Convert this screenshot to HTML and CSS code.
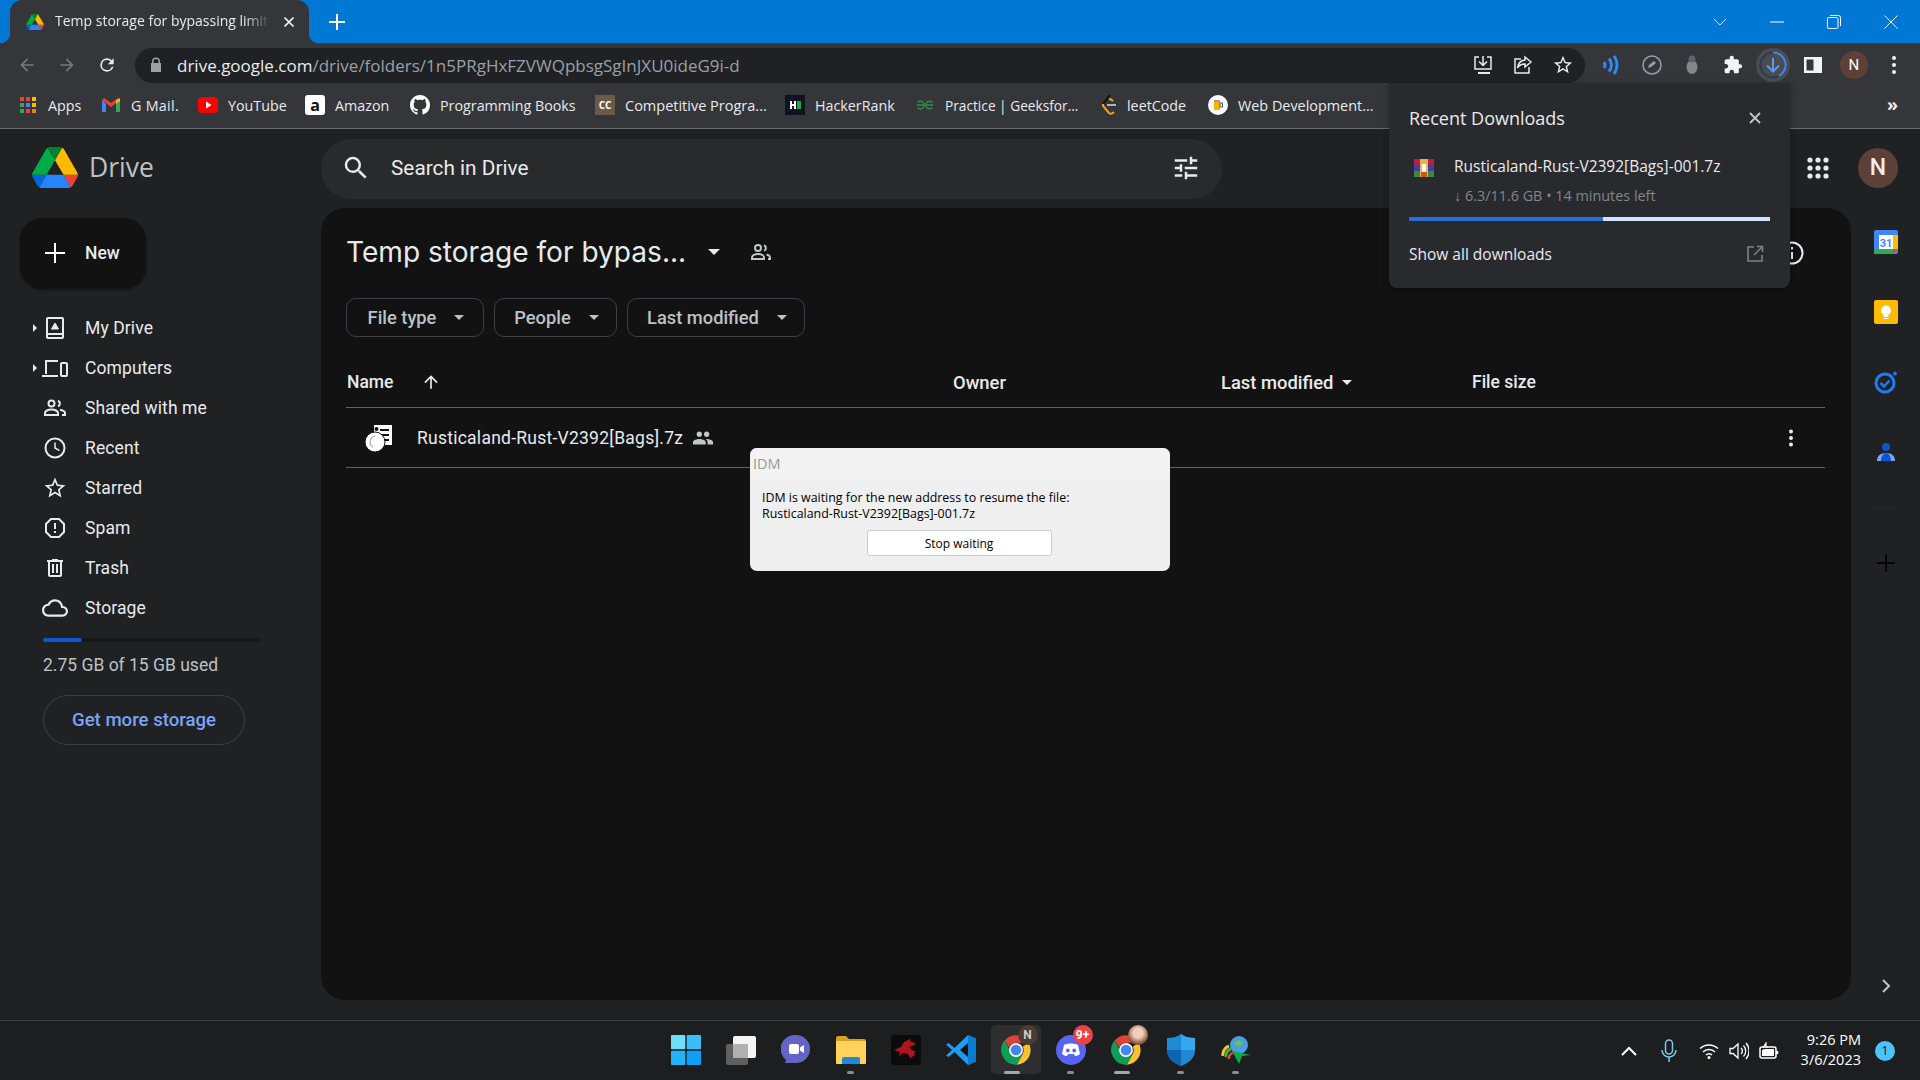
FILE: index.html
```html
<!DOCTYPE html>
<html lang="en">

<head>
    <meta charset="UTF-8">
    <title>Temp storage for bypassing limit</title>
    <link rel="stylesheet" href="styles.css">
</head>

<body>
    <svg class="defs" width="0" height="0">
        <symbol id="drive-logo" viewBox="0 0 87.3 78">
            <path d="m6.6 66.85 3.85 6.65c.8 1.4 1.95 2.5 3.3 3.3l13.75-23.8h-27.5c0 1.55.4 3.1 1.2 4.5z" fill="#0066da"/>
            <path d="m43.65 25-13.75-23.8c-1.35.8-2.5 1.9-3.3 3.3l-25.4 44a9.06 9.06 0 0 0 -1.2 4.5h27.5z" fill="#00ac47"/>
            <path d="m73.55 76.8c1.35-.8 2.5-1.9 3.3-3.3l1.6-2.75 7.65-13.25c.8-1.4 1.2-2.95 1.2-4.5h-27.502l5.852 11.5z" fill="#ea4335"/>
            <path d="m43.65 25 13.75-23.8c-1.35-.8-2.9-1.2-4.5-1.2h-18.5c-1.6 0-3.15.45-4.5 1.2z" fill="#00832d"/>
            <path d="m59.8 53h-32.3l-13.75 23.8c1.35.8 2.9 1.2 4.5 1.2h50.8c1.6 0 3.15-.45 4.5-1.2z" fill="#2684fc"/>
            <path d="m73.4 26.5-12.7-22c-.8-1.4-1.95-2.5-3.3-3.3l-13.75 23.8 16.15 28h27.45c0-1.55-.4-3.1-1.2-4.5z" fill="#ffba00"/>
        </symbol>
        <symbol id="chrome-logo" viewBox="0 0 24 24">
            <path d="M12 1a11 11 0 0 1 9.5 5.5H12a5.5 5.5 0 0 0-5.2 3.7L3.5 4.9A11 11 0 0 1 12 1z" fill="#db4437"/>
            <path d="M21.5 6.5A11 11 0 0 1 12.6 23l4.2-7.7a5.5 5.5 0 0 0 .2-5.8z" fill="#fbc02d"/>
            <path d="M3.5 4.9l4.7 8.7a5.5 5.5 0 0 0 8.6 1.7L12.6 23A11 11 0 0 1 3.5 4.9z" fill="#0f9d58"/>
            <circle cx="12" cy="12" r="5.2" fill="#fff"/>
            <circle cx="12" cy="12" r="4" fill="#4285f4"/>
        </symbol>
    </svg>

    <div class="titlebar">
        <div class="tab">
            <svg class="tab-favicon" width="18" height="16"><use href="#drive-logo"/></svg>
            <span class="tab-title">Temp storage for bypassing limit</span>
            <svg class="tab-close" width="12" height="12" viewBox="0 0 12 12"><path d="M1.5 1.5l9 9m0-9l-9 9" stroke="#fff" stroke-width="1.6"/></svg>
        </div>
        <svg class="new-tab" width="16" height="16" viewBox="0 0 16 16"><path d="M8 0v16M0 8h16" stroke="#fff" stroke-width="2"/></svg>
        <div class="win-controls">
            <svg class="win-btn chevron" width="14" height="8" viewBox="0 0 14 8"><path d="M1 1l6 6 6-6" fill="none" stroke="#cfe4f7" stroke-width="1"/></svg>
            <svg class="win-btn" width="14" height="14" viewBox="0 0 14 14"><path d="M0 7h14" stroke="#fff" stroke-width="1"/></svg>
            <svg class="win-btn" width="14" height="14" viewBox="0 0 14 14"><rect x=".5" y="2.5" width="10.5" height="11" rx="1.5" fill="none" stroke="#fff"/><path d="M3 .5h8.5a2 2 0 0 1 2 2V11" fill="none" stroke="#fff"/></svg>
            <svg class="win-btn" width="14" height="14" viewBox="0 0 14 14"><path d="M.5.5l13 13m0-13l-13 13" stroke="#fff" stroke-width="1"/></svg>
        </div>
    </div>

    <div class="toolbar">
        <div class="nav-btns">
            <svg width="20" height="20" viewBox="0 0 24 24"><path d="M20 11H7.8l5.6-5.6L12 4l-8 8 8 8 1.4-1.4L7.8 13H20z" fill="#74777b"/></svg>
            <svg width="20" height="20" viewBox="0 0 24 24"><path d="M4 11h12.2l-5.6-5.6L12 4l8 8-8 8-1.4-1.4 5.6-5.6H4z" fill="#74777b"/></svg>
            <svg width="20" height="20" viewBox="0 0 24 24"><path d="M17.65 6.35A7.96 7.96 0 0 0 12 4a8 8 0 1 0 7.73 10h-2.08A6 6 0 1 1 12 6c1.66 0 3.14.69 4.22 1.78L13 11h7V4z" fill="#e8eaed"/></svg>
        </div>
        <div class="omnibox">
            <svg class="lock" width="12" height="16" viewBox="0 0 12 16"><path d="M10 6V4.5a4 4 0 0 0-8 0V6H1v9h10V6zM3.5 6V4.5a2.5 2.5 0 0 1 5 0V6z" fill="#9aa0a6"/></svg>
            <span class="url"><span class="url-host">drive.google.com</span>/drive/folders/1n5PRgHxFZVWQpbsgSgInJXU0ideG9i-d</span>
            <div class="omni-actions">
                <svg width="22" height="22" viewBox="0 0 22 22" fill="none" stroke="#e8eaed" stroke-width="1.5"><path d="M7 3H3v12h16V3h-4"/><path d="M11 2v9m-4-3.5l4 4 4-4"/><path d="M6 19h12" stroke-width="2"/></svg>
                <svg width="22" height="22" viewBox="0 0 22 22" fill="none" stroke="#e8eaed" stroke-width="1.5"><path d="M9 5H3v14h14v-6"/><path d="M13 3l6 5-6 5v-3c-4 0-6 1-7.5 4C6 9.5 8.5 6.5 13 6z"/></svg>
                <svg width="22" height="22" viewBox="0 0 24 24"><path d="M22 9.24l-7.19-.62L12 2 9.19 8.63 2 9.24l5.46 4.73L5.82 21 12 17.27 18.18 21l-1.63-7.03L22 9.24zM12 15.4l-3.76 2.27 1-4.28-3.32-2.88 4.38-.38L12 6.1l1.71 4.04 4.38.38-3.32 2.88 1 4.28L12 15.4z" fill="#e8eaed"/></svg>
            </div>
        </div>
        <div class="ext-icons">
            <span class="ext"><svg width="20" height="20" viewBox="0 0 20 20" fill="none" stroke="#2b8cff" stroke-width="2.8"><path d="M3 7a5 5 0 0 1 0 6"/><path d="M8 3.5a10 10 0 0 1 0 13"/><path d="M13 1a15 15 0 0 1 0 18"/></svg></span>
            <span class="ext"><svg width="20" height="20" viewBox="0 0 20 20"><circle cx="10" cy="10" r="9" fill="none" stroke="#9aa0a6" stroke-width="1.5"/><path d="M6 13l1-3 5-4 2 2-5 4z" fill="#9aa0a6"/></svg></span>
            <span class="ext"><svg width="18" height="20" viewBox="0 0 18 20"><ellipse cx="9" cy="12" rx="5.5" ry="7" fill="#80868b"/><circle cx="9" cy="4" r="3.5" fill="#5f6368"/></svg></span>
            <span class="ext"><svg width="20" height="20" viewBox="0 0 24 24"><path d="M20.5 11H19V7c0-1.1-.9-2-2-2h-4V3.5C13 2.12 11.88 1 10.5 1S8 2.12 8 3.5V5H4c-1.1 0-1.99.9-1.99 2v3.8H3.5c1.49 0 2.7 1.21 2.7 2.7s-1.21 2.7-2.7 2.7H2V20c0 1.1.9 2 2 2h3.8v-1.5c0-1.49 1.21-2.7 2.7-2.7 1.49 0 2.7 1.21 2.7 2.7V22H17c1.1 0 2-.9 2-2v-4h1.5c1.38 0 2.5-1.12 2.5-2.5S21.88 11 20.5 11z" fill="#f1f3f4"/></svg></span>
            <span class="ext ext-active"><svg width="30" height="30" viewBox="0 0 30 30" fill="none"><circle cx="15" cy="15" r="12.5" stroke="#2c3a56" stroke-width="2"/><path d="M15 2.5A12.5 12.5 0 0 1 21 26" stroke="#4285f4" stroke-width="2"/><path d="M15 8v13m-6-5.5l6 6 6-6" stroke="#5e97f6" stroke-width="2"/></svg></span>
            <span class="ext"><svg width="20" height="20" viewBox="0 0 20 20"><path d="M1 2h18v16H1z" fill="#f1f3f4"/><path d="M3.5 4.5h7v11h-7z" fill="#35363a"/></svg></span>
            <span class="ext"><span class="chrome-avatar">N</span></span>
            <span class="ext"><svg width="6" height="20" viewBox="0 0 6 20"><circle cx="3" cy="3" r="2" fill="#f1f3f4"/><circle cx="3" cy="10" r="2" fill="#f1f3f4"/><circle cx="3" cy="17" r="2" fill="#f1f3f4"/></svg></span>
        </div>
    </div>

    <div class="bookmarks">
        <div class="bm bm-apps">
            <svg width="16" height="16" viewBox="0 0 16 16">
                <rect width="4" height="4" fill="#ea4335"/><rect x="6" width="4" height="4" fill="#ea4335"/><rect x="12" width="4" height="4" fill="#fbbc04"/>
                <rect y="6" width="4" height="4" fill="#34a853"/><rect x="6" y="6" width="4" height="4" fill="#4285f4"/><rect x="12" y="6" width="4" height="4" fill="#fbbc04"/>
                <rect y="12" width="4" height="4" fill="#34a853"/><rect x="6" y="12" width="4" height="4" fill="#ea4335"/><rect x="12" y="12" width="4" height="4" fill="#ea8600"/>
            </svg>
            <span class="bm-label">Apps</span>
        </div>
        <div class="bm bm-gmail">
            <svg width="18" height="16" viewBox="0 0 18 16"><path d="M0 3v12h4V7z" fill="#4285f4"/><path d="M18 3v12h-4V7z" fill="#34a853"/><path d="M0 3l9 7 9-7-2-2-7 5-7-5-2 2z" fill="#ea4335"/><path d="M14 3.5L18 1v3l-4 3z" fill="#fbbc04"/></svg>
            <span class="bm-label">G Mail.</span>
        </div>
        <div class="bm bm-yt">
            <svg width="20" height="16" viewBox="0 0 20 16"><rect width="20" height="16" rx="4" fill="#f00"/><path d="M8 4.5l5.5 3.5L8 11.5z" fill="#fff"/></svg>
            <span class="bm-label">YouTube</span>
        </div>
        <div class="bm bm-amazon">
            <span class="amazon-icon">a</span>
            <span class="bm-label">Amazon</span>
        </div>
        <div class="bm bm-github">
            <svg width="20" height="20" viewBox="0 0 16 16"><path d="M8 0C3.58 0 0 3.58 0 8c0 3.54 2.29 6.53 5.47 7.59.4.07.55-.17.55-.38 0-.19-.01-.82-.01-1.49-2.01.37-2.53-.49-2.69-.94-.09-.23-.48-.94-.82-1.13-.28-.15-.68-.52-.01-.53.63-.01 1.08.58 1.23.82.72 1.21 1.87.87 2.33.66.07-.52.28-.87.51-1.07-1.78-.2-3.64-.89-3.64-3.95 0-.87.31-1.59.82-2.15-.08-.2-.36-1.02.08-2.12 0 0 .67-.21 2.2.82.64-.18 1.32-.27 2-.27.68 0 1.36.09 2 .27 1.53-1.04 2.2-.82 2.2-.82.44 1.1.16 1.92.08 2.12.51.56.82 1.27.82 2.15 0 3.07-1.87 3.75-3.65 3.95.29.25.54.73.54 1.48 0 1.07-.01 1.93-.01 2.2 0 .21.15.46.55.38A8.013 8.013 0 0016 8c0-4.42-3.58-8-8-8z" fill="#fff"/></svg>
            <span class="bm-label">Programming Books</span>
        </div>
        <div class="bm bm-cc">
            <span class="cc-icon">CC</span>
            <span class="bm-label">Competitive Progra...</span>
        </div>
        <div class="bm bm-hr">
            <span class="hr-icon"><i></i><b></b></span>
            <span class="bm-label">HackerRank</span>
        </div>
        <div class="bm bm-gfg">
            <svg width="20" height="12" viewBox="0 0 20 12" fill="none" stroke="#2f8d46" stroke-width="1.4"><path d="M2.5 3.5A3.8 3.8 0 1 1 2.5 8.5M1.7 6H9.3"/><path d="M17.5 3.5A3.8 3.8 0 1 0 17.5 8.5M10.700 6H18.300"/></svg>
            <span class="bm-label">Practice | Geeksfor...</span>
        </div>
        <div class="bm bm-lc">
            <svg width="17" height="22" viewBox="0 0 17 22" fill="none" stroke-width="2"><path d="M10 1L3 10" stroke="#111"/><path d="M3 10v2l6 7c2 1.5 3 1 5-1" stroke="#f89f1b"/><path d="M9 5c2 0 3 1 4 2" stroke="#f89f1b"/><path d="M7 11h9" stroke="#b3b3b3"/></svg>
            <span class="bm-label">leetCode</span>
        </div>
        <div class="bm bm-web">
            <svg width="20" height="20" viewBox="0 0 20 20"><circle cx="10" cy="10" r="10" fill="#fff"/><rect x="6" y="6" width="6" height="9" fill="#f5b400"/><rect x="6" y="5" width="6" height="2" fill="#999"/><rect x="12" y="8" width="2.5" height="4" fill="none" stroke="#555"/></svg>
            <span class="bm-label">Web Development...</span>
        </div>
        <span class="bm-overflow">»</span>
    </div>

    <div class="app">
        <aside class="sidebar">
            <div class="brand">
                <svg width="46" height="41"><use href="#drive-logo"/></svg>
                <span class="brand-name">Drive</span>
            </div>
            <div class="new-btn">
                <svg width="22" height="22" viewBox="0 0 22 22"><path d="M11 1v20M1 11h20" stroke="#fff" stroke-width="2"/></svg>
                <span>New</span>
            </div>
            <ul class="side-nav">
                <li class="side-item">
                    <span class="caret-right"></span>
                    <svg class="side-icon" width="24" height="24" viewBox="0 0 24 24" fill="none" stroke="#e8eaed" stroke-width="2"><rect x="4" y="2" width="16" height="20" rx="1"/><path d="M4 18h16"/><path d="M12 7l3.5 6h-7z" fill="#e8eaed" stroke-width="1"/></svg>
                    <span>My Drive</span>
                </li>
                <li class="side-item">
                    <span class="caret-right"></span>
                    <svg class="side-icon" width="26" height="24" viewBox="0 0 26 24" fill="none" stroke="#e8eaed" stroke-width="2"><path d="M16 5H4v13"/><path d="M0 20h16"/><rect x="19" y="7" width="6" height="13" rx="1"/></svg>
                    <span>Computers</span>
                </li>
                <li class="side-item">
                    <svg class="side-icon" width="24" height="24" viewBox="0 0 24 24" fill="none" stroke="#e8eaed" stroke-width="2"><circle cx="8.5" cy="7.5" r="3"/><path d="M15 4.7a3 3 0 0 1 0 5.6"/><path d="M2 19v-2c0-2 3-3.5 6.5-3.5S15 15 15 17v2z"/><path d="M17 13.7c2.5.5 5 1.5 5 3.3v2h-3"/></svg>
                    <span>Shared with me</span>
                </li>
                <li class="side-item">
                    <svg class="side-icon" width="24" height="24" viewBox="0 0 24 24" fill="none" stroke="#e8eaed" stroke-width="2"><circle cx="12" cy="12" r="9.5"/><path d="M12 6.5V12l4.5 2.7" stroke-width="1.5"/></svg>
                    <span>Recent</span>
                </li>
                <li class="side-item">
                    <svg class="side-icon" width="25" height="25" viewBox="0 0 24 24"><path d="M22 9.24l-7.19-.62L12 2 9.19 8.63 2 9.24l5.46 4.73L5.82 21 12 17.27 18.18 21l-1.63-7.03L22 9.24zM12 15.4l-3.76 2.27 1-4.28-3.32-2.88 4.38-.38L12 6.1l1.71 4.04 4.38.38-3.32 2.88 1 4.28L12 15.4z" fill="#e8eaed"/></svg>
                    <span>Starred</span>
                </li>
                <li class="side-item">
                    <svg class="side-icon" width="24" height="24" viewBox="0 0 24 24" fill="none" stroke="#e8eaed" stroke-width="2"><path d="M8 3h8l5 5v8l-5 5H8l-5-5V8z"/><path d="M12 7v6M12 15v2"/></svg>
                    <span>Spam</span>
                </li>
                <li class="side-item">
                    <svg class="side-icon" width="24" height="24" viewBox="0 0 24 24"><path d="M15 4V3H9v1H4v2h1v13c0 1.1.9 2 2 2h10c1.1 0 2-.9 2-2V6h1V4h-5zm2 15H7V6h10v13zM9 8h2v9H9zm4 0h2v9h-2z" fill="#e8eaed"/></svg>
                    <span>Trash</span>
                </li>
                <li class="side-item">
                    <svg class="side-icon" width="26" height="26" viewBox="0 0 24 24"><path d="M19.35 10.04C18.67 6.59 15.64 4 12 4 9.11 4 6.6 5.64 5.35 8.04 2.34 8.36 0 10.91 0 14c0 3.31 2.69 6 6 6h13c2.76 0 5-2.24 5-5 0-2.64-2.05-4.78-4.65-4.96zM19 18H6c-2.21 0-4-1.79-4-4 0-2.05 1.53-3.76 3.56-3.97l1.07-.11.5-.95C8.08 7.14 9.94 6 12 6c2.62 0 4.88 1.86 5.39 4.43l.3 1.5 1.53.11c1.56.1 2.78 1.41 2.78 2.96 0 1.65-1.35 3-3 3z" fill="#e8eaed"/></svg>
                    <span>Storage</span>
                </li>
            </ul>
            <div class="storage-bar"><div class="storage-fill"></div></div>
            <p class="storage-text">2.75 GB of 15 GB used</p>
            <div class="storage-btn">Get more storage</div>
        </aside>

        <header class="topbar">
            <div class="search">
                <svg width="30" height="30" viewBox="0 0 24 24"><path d="M15.5 14h-.79l-.28-.27A6.471 6.471 0 0 0 16 9.5 6.5 6.5 0 1 0 9.5 16c1.61 0 3.09-.59 4.23-1.57l.27.28v.79l5 4.99L20.49 19l-4.99-5zm-6 0C7.01 14 5 11.99 5 9.5S7.01 5 9.5 5 14 7.01 14 9.5 11.99 14 9.5 14z" fill="#e8eaed"/></svg>
                <span class="search-text">Search in Drive</span>
                <svg class="search-tune" width="30" height="30" viewBox="0 0 24 24"><path d="M3 17v2h6v-2H3zM3 5v2h10V5H3zm10 16v-2h8v-2h-8v-2h-2v6h2zM7 9v2H3v2h4v2h2V9H7zm14 4v-2H11v2h10zm-6-4h2V7h4V5h-4V3h-2v6z" fill="#e8eaed"/></svg>
            </div>
            <div class="top-right">
                <svg width="22" height="22" viewBox="0 0 22 22" fill="#e8eaed">
                    <circle cx="3" cy="3" r="2.6"/><circle cx="11" cy="3" r="2.6"/><circle cx="19" cy="3" r="2.6"/>
                    <circle cx="3" cy="11" r="2.6"/><circle cx="11" cy="11" r="2.6"/><circle cx="19" cy="11" r="2.6"/>
                    <circle cx="3" cy="19" r="2.6"/><circle cx="11" cy="19" r="2.6"/><circle cx="19" cy="19" r="2.6"/>
                </svg>
                <span class="drive-avatar">N</span>
            </div>
        </header>

        <main class="panel">
            <div class="folder-head">
                <h1 class="folder-title">Temp storage for bypas...</h1>
                <span class="caret caret-title"></span>
                <svg class="folder-people" width="24" height="24" viewBox="0 0 24 24" fill="none" stroke="#c4c7c5" stroke-width="2"><circle cx="9" cy="8" r="3"/><path d="M15 5.2a3 3 0 0 1 0 5.6"/><path d="M3 19v-1.5c0-2 2.5-3.5 6-3.5s6 1.5 6 3.5V19z"/><path d="M17.5 14.5c2 .5 3.5 1.5 3.5 3V19h-2"/></svg>
                <svg class="folder-info" width="26" height="26" viewBox="0 0 26 26" fill="none" stroke="#e8eaed" stroke-width="2"><circle cx="13" cy="13" r="10.5"/><path d="M13 12v7M13 7v2.5"/></svg>
            </div>
            <div class="chips">
                <div class="chip chip-type">File type<span class="caret"></span></div>
                <div class="chip chip-people">People<span class="caret"></span></div>
                <div class="chip chip-modified">Last modified<span class="caret"></span></div>
            </div>
            <div class="list-head">
                <div class="col-name">
                    <span>Name</span>
                    <svg class="sort-arrow" width="20" height="20" viewBox="0 0 24 24"><path d="M4 12l1.41 1.41L11 7.83V20h2V7.83l5.58 5.59L20 12l-8-8-8 8z" fill="#e8eaed"/></svg>
                </div>
                <div class="col-owner">Owner</div>
                <div class="col-modified">Last modified<span class="caret"></span></div>
                <div class="col-size">File size</div>
            </div>
            <div class="file-row">
                <svg class="file-icon" width="28" height="28" viewBox="0 0 28 28">
                    <path d="M9 1h18v20H9z" fill="#fff"/>
                    <path d="M15 6h9M15 11h9M19 16h5" stroke="#121212" stroke-width="1.8"/>
                    <circle cx="11.5" cy="5" r="2" fill="#121212"/>
                    <circle cx="10" cy="18" r="10" fill="#fff" stroke="#121212" stroke-width="1"/>
                    <path d="M10 12a6 6 0 0 0-2 11" fill="none" stroke="#aaa" stroke-width="1.2"/>
                </svg>
                <span class="file-name">Rusticaland-Rust-V2392[Bags].7z</span>
                <svg class="file-shared" width="22" height="22" viewBox="0 0 24 24"><path d="M16 11c1.66 0 2.99-1.34 2.99-3S17.66 5 16 5c-1.66 0-3 1.34-3 3s1.34 3 3 3zm-8 0c1.66 0 2.99-1.34 2.99-3S9.66 5 8 5C6.34 5 5 6.34 5 8s1.34 3 3 3zm0 2c-2.33 0-7 1.17-7 3.5V19h14v-2.5c0-2.33-4.67-3.5-7-3.5zm8 0c-.29 0-.62.02-.97.05 1.16.84 1.97 1.97 1.97 3.45V19h6v-2.5c0-2.33-4.67-3.5-7-3.5z" fill="#c4c7c5"/></svg>
                <svg class="file-more" width="6" height="18" viewBox="0 0 6 18" fill="#e8eaed"><circle cx="3" cy="2.5" r="2"/><circle cx="3" cy="9" r="2"/><circle cx="3" cy="15.5" r="2"/></svg>
            </div>
        </main>

        <nav class="rail">
            <svg width="24" height="24" viewBox="0 0 24 24"><rect width="24" height="24" rx="2" fill="#4285f4"/><rect x="5" y="5" width="14" height="14" fill="#fff"/><rect x="19" y="5" width="5" height="14" fill="#fbbc04"/><rect y="19" width="19" height="5" fill="#34a853"/><path d="M19 19h5l-5 5z" fill="#ea4335"/><text x="12" y="16.5" class="cal-num">31</text></svg>
            <svg width="24" height="24" viewBox="0 0 24 24"><rect width="24" height="24" rx="2" fill="#ffbb00"/><circle cx="12" cy="10.5" r="5" fill="#fff"/><rect x="9.5" y="15" width="5" height="2" fill="#fff"/><rect x="9.5" y="18" width="5" height="1" fill="#fff"/></svg>
            <svg width="24" height="24" viewBox="0 0 24 24" fill="none" stroke="#1f7cf2" stroke-width="3"><circle cx="11" cy="13" r="9"/><path d="M6.5 13l3.5 3.5 5.5-6" stroke="#1f7cf2" stroke-width="2.5"/><circle cx="21" cy="3.5" r="1.5" fill="#1f7cf2" stroke-width="1"/></svg>
            <svg width="24" height="24" viewBox="0 0 24 24"><circle cx="12" cy="7" r="4" fill="#0b57d0"/><path d="M3 21c0-5 3-8 9-8s9 3 9 8z" fill="#7fa5f0"/><path d="M7 21c0-4 2-8 5-8s5 4 5 8z" fill="#0b57d0"/></svg>
            <div class="rail-divider"></div>
            <svg class="rail-plus" width="18" height="18" viewBox="0 0 18 18"><path d="M9 0v18M0 9h18" stroke="#050505" stroke-width="1.8"/></svg>
            <svg class="rail-hide" width="10" height="14" viewBox="0 0 10 14"><path d="M2 1l6 6-6 6" fill="none" stroke="#c4c7c5" stroke-width="2"/></svg>
        </nav>
    </div>

    <div class="taskbar">
        <div class="task-icons">
            <span class="task-item">
                <svg width="30" height="30" viewBox="0 0 30 30"><rect width="14.3" height="14.3" rx="1" fill="#6fdcfb"/><rect x="15.7" width="14.3" height="14.3" rx="1" fill="#3bbdf7"/><rect y="15.7" width="14.3" height="14.3" rx="1" fill="#22b2f7"/><rect x="15.7" y="15.7" width="14.3" height="14.3" rx="1" fill="#0fa0f5"/></svg>
            </span>
            <span class="task-item">
                <svg width="30" height="30" viewBox="0 0 30 30"><rect y="9" width="22" height="21" rx="2" fill="#5f5f5f"/><rect x="7" y="1" width="23" height="22" rx="2" fill="#f4f4f4"/><rect x="7" y="9" width="15" height="14" fill="#b0b0b0"/></svg>
            </span>
            <span class="task-item">
                <svg width="30" height="32" viewBox="0 0 30 32"><path d="M15 1a14 14 0 0 1 0 28H4l1-3A14 14 0 0 1 15 1z" fill="#6264c8"/><rect x="8" y="10" width="10" height="10" rx="2" fill="#fff"/><path d="M19 13.5l4-2.5v8l-4-2.5z" fill="#fff"/></svg>
            </span>
            <span class="task-item task-open">
                <svg width="30" height="28" viewBox="0 0 30 28"><path d="M0 2a2 2 0 0 1 2-2h8l3 3h15a2 2 0 0 1 2 2v4H0z" fill="#d8a01e"/><rect y="5" width="30" height="23" rx="1" fill="#ffd35c"/><path d="M8 21h14a2 2 0 0 1 2 2v5H6v-5a2 2 0 0 1 2-2z" fill="#1c8ad8"/></svg>
            </span>
            <span class="task-item">
                <svg width="30" height="30" viewBox="0 0 30 30"><rect width="30" height="30" rx="3" fill="#0b0b0b"/><path d="M3 15l7-3 3-5 6-3 1 3 5 1-3 3-4 1 3 3 3 1-1 5-4 2-2-4-5-1-4 3 1-4z" fill="#b0151b"/></svg>
            </span>
            <span class="task-item">
                <svg width="30" height="30" viewBox="0 0 30 30"><path d="M22 0l8 3.5v23L22 30 8.5 17 2.5 22 0 20.5 6 15 0 9.5 2.5 8l6 5z" fill="#1f9cf0"/><path d="M22 8l-8 7 8 7z" fill="#121416"/><path d="M22 0l8 3.5v23L22 30z" fill="#0a7cd0"/></svg>
            </span>
            <span class="task-item task-active task-running">
                <svg width="32" height="32"><use href="#chrome-logo"/></svg>
                <span class="task-badge badge-n">N</span>
            </span>
            <span class="task-item task-open">
                <svg width="32" height="32" viewBox="0 0 32 32"><circle cx="16" cy="16" r="15" fill="#5865f2"/><path d="M9 11c4-2 10-2 14 0l2 9c-2 1.5-3.5 2-5 2l-1-2h-6l-1 2c-1.5 0-3-.5-5-2z" fill="#fff"/><circle cx="12.8" cy="16.5" r="1.9" fill="#5865f2"/><circle cx="19.2" cy="16.5" r="1.9" fill="#5865f2"/></svg>
                <span class="task-badge badge-red">9+</span>
            </span>
            <span class="task-item task-running">
                <svg width="32" height="32"><use href="#chrome-logo"/></svg>
                <span class="task-badge badge-photo"></span>
            </span>
            <span class="task-item task-open">
                <svg width="28" height="32" viewBox="0 0 28 32"><path d="M14 0c4 3 9 4 14 4v12c0 8-6 13-14 16C6 29 0 24 0 16V4c5 0 10-1 14-4z" fill="#1e8ad6"/><path d="M14 0c4 3 9 4 14 4v12H14z" fill="#35a7ee"/><path d="M14 16H0c0 8 6 13 14 16z" fill="#0f63b5"/></svg>
            </span>
            <span class="task-item task-open">
                <svg width="30" height="30" viewBox="0 0 30 30"><path d="M2 21a9 9 0 0 1 6-10" fill="none" stroke="#f2c230" stroke-width="3"/><path d="M5 22a7 7 0 0 1 5-8" fill="none" stroke="#36b54a" stroke-width="3"/><path d="M8 24a5 5 0 0 1 4-6" fill="none" stroke="#e8453c" stroke-width="2.5"/><circle cx="18" cy="10" r="9" fill="#4a9fe0"/><path d="M12 8l6-3 4 3-4 4z" fill="#6cc24a"/><path d="M11 16l19 4-9 1-3 8z" fill="#0fa84a"/></svg>
            </span>
        </div>
        <div class="tray">
            <svg class="tray-up" width="16" height="10" viewBox="0 0 16 10"><path d="M1 9l7-7 7 7" fill="none" stroke="#fff" stroke-width="2"/></svg>
            <svg class="tray-mic" width="16" height="24" viewBox="0 0 16 24" fill="none" stroke="#7cc6e6" stroke-width="1.5"><rect x="4.5" y="1" width="7" height="14" rx="3.5"/><path d="M1 11a7 7 0 0 0 14 0M8 18v5"/></svg>
            <svg class="tray-wifi" width="20" height="16" viewBox="0 0 20 16" fill="none" stroke="#fff" stroke-width="1.5"><path d="M1 5.5a13 13 0 0 1 18 0M4 9a8.500 8.500 0 0 1 12 0M7 12a4 4 0 0 1 6 0"/><circle cx="10" cy="14.5" r=".8" fill="#fff"/></svg>
            <svg class="tray-sound" width="20" height="18" viewBox="0 0 20 18" fill="none" stroke="#fff" stroke-width="1.3"><path d="M1 6.5h3L9 2v14l-5-4.5H1z"/><path d="M12 6a4 4 0 0 1 0 6M14.5 3.5a8 8 0 0 1 0 11M17 1a12 12 0 0 1 0 16"/></svg>
            <svg class="tray-batt" width="21" height="18" viewBox="0 0 21 18" fill="none" stroke="#fff" stroke-width="1.5"><rect x="1" y="5" width="16" height="11" rx="2"/><path d="M3 14V8l3-1h9v7z" fill="#fff" stroke="none"/><path d="M18 9v3" stroke-width="2.5"/><path d="M4 6l3-5v4h2" stroke-width="1.2"/></svg>
            <div class="clock">
                <div>9:26 PM</div>
                <div>3/6/2023</div>
            </div>
            <span class="notify">1</span>
        </div>
    </div>

    <!-- chrome download bubble, floats over the page -->
    <div class="downloads">
        <div class="dl-head">
            <span>Recent Downloads</span>
            <svg width="12" height="12" viewBox="0 0 12 12"><path d="M1 1l10 10m0-10L1 11" stroke="#c4c7c5" stroke-width="1.8"/></svg>
        </div>
        <div class="dl-file">
            <svg class="dl-icon" width="20" height="18" viewBox="0 0 20 18">
                <rect width="20" height="6" fill="#b3204d"/><rect y="6" width="20" height="6" fill="#3f3fa8"/><rect y="12" width="20" height="6" fill="#3a8a3a"/>
                <rect x="6" y="0" width="8" height="18" fill="#e9b44c"/><rect x="8" y="5" width="4" height="8" fill="#fff"/><rect x="7" y="13" width="6" height="5" fill="#c85a1a"/>
            </svg>
            <div class="dl-text">
                <div class="dl-name">Rusticaland-Rust-V2392[Bags]-001.7z</div>
                <div class="dl-status">↓ 6.3/11.6 GB • 14 minutes left</div>
            </div>
        </div>
        <div class="dl-progress"><div class="dl-progress-fill"></div></div>
        <div class="dl-foot">
            <span>Show all downloads</span>
            <svg width="18" height="18" viewBox="0 0 18 18" fill="none" stroke="#7d8186" stroke-width="1.6"><path d="M8 2H2v14h14v-6"/><path d="M11 1.5h5.500V7M16 2L8 10"/></svg>
        </div>
    </div>

    <!-- IDM waiting dialog -->
    <div class="idm">
        <div class="idm-title">IDM</div>
        <div class="idm-body">
            <p>IDM is waiting for the new address to resume the file:<br>Rusticaland-Rust-V2392[Bags]-001.7z</p>
            <button class="idm-btn">Stop waiting</button>
        </div>
    </div>
</body>

</html>
```

FILE: styles.css
```css
* {
    margin: 0;
    padding: 0;
    box-sizing: border-box;
}

body {
    width: 1920px;
    height: 1080px;
    overflow: hidden;
    display: flex;
    flex-direction: column;
    position: relative;
    background: #1f2123;
    color: #e8eaed;
    font-family: "Roboto", "Liberation Sans", sans-serif;
    font-size: 17.5px;
}

svg {
    display: block;
    flex-shrink: 0;
}

.defs {
    position: absolute;
}

/* browser chrome */
.titlebar {
    height: 43px;
    display: flex;
    align-items: center;
    padding-left: 10px;
    background: #0078d4;
}

.tab {
    width: 299px;
    height: 43px;
    position: relative;
    display: flex;
    align-items: center;
    padding: 0 14px 0 16px;
    background: #35363a;
    border-radius: 12px 12px 0 0;
    font-family: "Open Sans", "Liberation Sans", sans-serif;
    font-size: 14px;
    color: #e8eaed;
}

.tab::before,
.tab::after {
    content: "";
    position: absolute;
    bottom: 0;
    width: 10px;
    height: 10px;
}

.tab::before {
    left: -10px;
    background: radial-gradient(circle at 0 0, transparent 10px, #35363a 10.5px);
}

.tab::after {
    right: -10px;
    background: radial-gradient(circle at 100% 0, transparent 10px, #35363a 10.5px);
}

.tab-favicon {
    margin-right: 11px;
}

.tab-title {
    flex: 1;
    overflow: hidden;
    white-space: nowrap;
    padding-bottom: 2px;
    -webkit-mask-image: linear-gradient(to right, #000 88%, transparent);
    mask-image: linear-gradient(to right, #000 88%, transparent);
}

.tab-close {
    margin-left: 13px;
}

.new-tab {
    margin-left: 20px;
}

.win-controls {
    margin-left: auto;
    display: flex;
    align-items: center;
    gap: 43px;
    padding-right: 22px;
}

.toolbar {
    height: 42px;
    display: flex;
    align-items: center;
    padding-top: 2px;
    background: #35363a;
}

.nav-btns {
    width: 135px;
    display: flex;
    gap: 20px;
    padding-left: 17px;
}

.omnibox {
    width: 1450px;
    height: 35px;
    display: flex;
    align-items: center;
    padding-left: 15px;
    background: #202124;
    border-radius: 18px;
}

.lock {
    margin-right: 15px;
}

.url {
    font-family: "Open Sans", "Liberation Sans", sans-serif;
    font-size: 17px;
    color: #9aa0a6;
    white-space: nowrap;
}

.url-host {
    color: #e8eaed;
}

.omni-actions {
    margin-left: auto;
    display: flex;
    gap: 18px;
    padding-right: 11px;
}

.ext-icons {
    display: flex;
    align-items: center;
    margin-left: 6px;
}

.ext {
    width: 40.5px;
    height: 41px;
    display: flex;
    align-items: center;
    justify-content: center;
}

.ext-active {
    background: #4a4c50;
    border-radius: 50%;
    width: 34px;
    height: 34px;
    margin: 0 3px;
}

.chrome-avatar {
    width: 28px;
    height: 28px;
    display: flex;
    align-items: center;
    justify-content: center;
    border-radius: 50%;
    background: #5d4037;
    font-size: 15px;
    color: #fff;
}

.bookmarks {
    height: 44px;
    display: grid;
    grid-template-columns: 82px 96px 107px 105px 185px 190px 130px 185px 108px 1fr;
    align-items: center;
    position: relative;
    padding: 0 0 3px 20px;
    background: #35363a;
    border-bottom: 1px solid #6a6c70;
    font-family: "Open Sans", "Liberation Sans", sans-serif;
    font-size: 14.3px;
    color: #e8eaed;
}

.bm {
    display: flex;
    align-items: center;
    gap: 10px;
    white-space: nowrap;
}

.bm-apps {
    gap: 12px;
}

.bm-gmail {
    gap: 11px;
}

.bm-gmail .bm-label {
    letter-spacing: 0.3px;
}

.bm-cc .bm-label {
    font-size: 14.5px;
}

.bm-gfg .bm-label {
    font-size: 13.7px;
}

.bm-web .bm-label {
    font-size: 14.4px;
}

.amazon-icon {
    width: 20px;
    height: 20px;
    display: flex;
    align-items: center;
    justify-content: center;
    border-radius: 3px;
    background: #fff;
    color: #111;
    font-weight: 700;
    font-size: 16px;
}

.cc-icon {
    width: 20px;
    height: 20px;
    display: flex;
    align-items: center;
    justify-content: center;
    background: #6b5a48;
    color: #fff;
    font-size: 10px;
    font-weight: 700;
}

.hr-icon {
    width: 20px;
    height: 20px;
    display: flex;
    align-items: center;
    justify-content: center;
    gap: 1px;
    background: #0e141e;
}

.hr-icon i {
    width: 6px;
    height: 8px;
    border: solid #fff;
    border-width: 0 2px;
    background: linear-gradient(#0e141e 3px, #fff 3px, #fff 5px, #0e141e 5px);
}

.hr-icon b {
    width: 4px;
    height: 8px;
    background: #1ba94c;
}

.bm-overflow {
    position: absolute;
    right: 22px;
    top: 7px;
    font-size: 18px;
    font-weight: 700;
}

/* drive */
.app {
    flex: 1;
    min-height: 0;
    display: grid;
    grid-template-columns: 321px 1fr 69px;
    grid-template-rows: 79px 1fr;
}

.sidebar {
    grid-row: 1 / 3;
    padding-left: 20px;
}

.brand {
    height: 79px;
    display: flex;
    align-items: center;
    gap: 11px;
    padding: 0 0 3px 12px;
}

.brand-name {
    font-size: 26.5px;
    color: #bdc1c6;
    font-family: "Open Sans", "Roboto", sans-serif;
}

.new-btn {
    width: 126px;
    height: 71px;
    margin-top: 10px;
    display: flex;
    align-items: center;
    gap: 19px;
    padding: 0 0 2px 24px;
    background: #121212;
    border-radius: 22px;
    font-weight: 500;
    box-shadow: 0 1px 3px rgba(0, 0, 0, 0.4);
}

.side-nav {
    list-style: none;
    margin-top: 19px;
}

.side-item {
    height: 40px;
    display: flex;
    align-items: center;
    position: relative;
    padding-left: 65px;
    letter-spacing: 0.1px;
}

.side-icon {
    position: absolute;
    left: 35px;
    top: 50%;
    transform: translate(-50%, -50%);
}

.caret-right {
    position: absolute;
    left: 13px;
    top: 50%;
    margin-top: -4px;
    border-left: 4px solid #e8eaed;
    border-top: 4px solid transparent;
    border-bottom: 4px solid transparent;
}

.storage-bar {
    width: 217px;
    height: 4px;
    margin: 10px 0 0 23px;
    background: #17181a;
    border-radius: 2px;
}

.storage-fill {
    width: 39px;
    height: 4px;
    background: #0b57d0;
    border-radius: 2px;
}

.storage-text {
    margin: 13px 0 0 23px;
    color: #bdc1c6;
}

.storage-btn {
    width: 202px;
    height: 50px;
    margin: 20px 0 0 23px;
    display: flex;
    align-items: center;
    justify-content: center;
    border: 1px solid #3c3f43;
    border-radius: 25px;
    color: #7fa2f7;
    font-weight: 500;
    font-size: 18.6px;
}

.topbar {
    grid-column: 2 / 4;
    display: flex;
    align-items: center;
    justify-content: space-between;
}

.search {
    width: 901px;
    height: 60px;
    display: flex;
    align-items: center;
    padding: 0 20px;
    gap: 20px;
    background: #282a2c;
    border-radius: 30px;
    font-size: 20.8px;
}

.search svg {
    margin-top: -1px;
}

.search-text {
    padding-bottom: 2px;
}

.search-tune {
    margin-left: auto;
    transform: translateX(-1px);
}

.top-right {
    display: flex;
    align-items: center;
    gap: 29px;
    padding: 0 22px 2px 0;
}

.drive-avatar {
    width: 40px;
    height: 40px;
    display: flex;
    align-items: center;
    justify-content: center;
    border-radius: 50%;
    background: #5d4037;
    font-size: 23px;
    font-weight: 500;
    color: #eee;
}

.panel {
    margin-bottom: 20px;
    padding: 22px 26px 0 25px;
    background: #121212;
    border-radius: 24px;
}

.folder-head {
    height: 44px;
    display: flex;
    align-items: center;
    position: relative;
}

.folder-title {
    width: 340px;
    font-family: "Inter", "Roboto", sans-serif;
    font-size: 28.1px;
    font-weight: 400;
    white-space: nowrap;
}

.caret {
    display: inline-block;
    border-top: 5px solid currentColor;
    border-left: 5px solid transparent;
    border-right: 5px solid transparent;
    margin-left: 18px;
}

.caret-title {
    margin-left: 22px;
    color: #e8eaed;
    border-top-width: 6px;
    border-left-width: 6px;
    border-right-width: 6px;
}

.folder-people {
    margin-left: 29px;
}

.folder-info {
    position: absolute;
    right: 20px;
    top: 10px;
}

.chips {
    margin-top: 24px;
    display: flex;
    gap: 10px;
}

.chip {
    height: 39px;
    display: flex;
    align-items: center;
    justify-content: center;
    padding-left: 2px;
    border: 1px solid #3c3f43;
    border-radius: 10px;
    color: #bdc1c6;
    font-weight: 500;
    font-size: 18.3px;
}

.chip-type {
    width: 138px;
}

.chip-people {
    width: 123px;
}

.chip-modified {
    width: 178px;
}

.list-head {
    height: 71px;
    padding-top: 20px;
    display: flex;
    align-items: center;
    border-bottom: 1px solid #5f6368;
    font-weight: 500;
}

.col-name {
    width: 607px;
    display: flex;
    align-items: center;
    padding-left: 1px;
}

.sort-arrow {
    margin-left: 28px;
}

.col-owner {
    width: 268px;
    font-size: 18.4px;
}

.col-modified {
    width: 251px;
    display: flex;
    align-items: center;
    font-size: 18.4px;
}

.col-modified .caret {
    margin-left: 9px;
    color: #e8eaed;
}

.file-row {
    height: 60px;
    display: flex;
    align-items: center;
    padding-left: 19px;
    border-bottom: 1px solid #5f6368;
}

.file-name {
    margin-left: 24px;
    letter-spacing: 0.25px;
}

.file-shared {
    margin-left: 9px;
}

.file-more {
    margin-left: auto;
    margin-right: 31px;
}

.rail {
    display: flex;
    flex-direction: column;
    align-items: center;
    padding-top: 22px;
    position: relative;
    gap: 46px;
}

.cal-num {
    font-family: "Roboto", sans-serif;
    font-size: 11px;
    font-weight: 700;
    fill: #4285f4;
    text-anchor: middle;
}

.rail-divider {
    width: 26px;
    height: 1px;
    margin-top: -2px;
    background: #25272a;
}

.rail-plus {
    margin-top: -1px;
}

.rail-hide {
    position: absolute;
    top: 771px;
}

/* windows taskbar */
.taskbar {
    height: 60px;
    display: flex;
    align-items: center;
    justify-content: center;
    position: relative;
    padding-bottom: 2px;
    background: #1c1e20;
    border-top: 1px solid #3a3b3d;
}

.task-icons {
    display: flex;
    gap: 5px;
    margin-left: 1px;
}

.task-item {
    width: 50px;
    height: 49px;
    position: relative;
    display: flex;
    align-items: center;
    justify-content: center;
    border-radius: 5px;
}

.task-active {
    background: #2c2e30;
}

.task-open::after,
.task-running::after {
    content: "";
    position: absolute;
    left: 50%;
    bottom: 0;
    width: 7px;
    height: 3px;
    margin-left: -3.5px;
    border-radius: 2px;
    background: #8a8c8e;
}

.task-running::after {
    width: 16px;
    margin-left: -12px;
    background: #a5a7a9;
}

.task-badge {
    position: absolute;
    right: 3px;
    top: 0;
    width: 20px;
    height: 20px;
    display: flex;
    align-items: center;
    justify-content: center;
    border-radius: 50%;
    font-size: 12px;
    font-weight: 700;
}

.badge-n {
    background: #4d3a33;
    color: #ccc;
}

.badge-red {
    background: #ed4245;
    color: #fff;
}

.badge-photo {
    background: radial-gradient(circle at 50% 40%, #f0d0b8 30%, #8a4f3c 70%);
}

.tray {
    position: absolute;
    right: 0;
    top: 0;
    height: 59px;
    display: flex;
    align-items: center;
    font-family: "Open Sans", "Liberation Sans", sans-serif;
    font-size: 14.5px;
    color: #fff;
}

.tray-mic {
    margin-left: 24px;
}

.tray-wifi {
    margin-left: 22px;
}

.tray-sound {
    margin-left: 10px;
}

.tray-batt {
    margin-left: 10px;
}

.clock {
    margin: -1px 0 0 21px;
    text-align: right;
    line-height: 20px;
}

.notify {
    width: 20px;
    height: 20px;
    margin: 0 25px 0 14px;
    display: flex;
    align-items: center;
    justify-content: center;
    border-radius: 50%;
    background: #4cc2ff;
    color: #111;
    font-size: 12px;
}

/* overlays */
.downloads {
    position: absolute;
    left: 1389px;
    top: 83px;
    width: 401px;
    height: 205px;
    padding: 0 20px;
    background: #292a2e;
    border-radius: 0 0 8px 8px;
    box-shadow: 0 2px 6px rgba(0, 0, 0, 0.3);
    font-family: "Open Sans", "Liberation Sans", sans-serif;
}

.dl-head {
    height: 70px;
    display: flex;
    align-items: center;
    justify-content: space-between;
    padding-right: 9px;
    font-size: 18px;
}

.dl-file {
    display: flex;
    gap: 20px;
    padding-left: 5px;
    margin-top: 1px;
}

.dl-icon {
    margin-top: 5px;
}

.dl-name {
    font-size: 15.5px;
    line-height: 24px;
}

.dl-status {
    margin-top: 8px;
    font-size: 14.4px;
    line-height: 20px;
    color: #80868b;
}

.dl-progress {
    width: 361px;
    height: 4px;
    margin-top: 11px;
    background: #d2e3fc;
}

.dl-progress-fill {
    width: 194px;
    height: 4px;
    background: #2a6fd6;
}

.dl-foot {
    height: 65px;
    display: flex;
    align-items: center;
    justify-content: space-between;
    padding-right: 6px;
    font-size: 15.5px;
}

.idm {
    position: absolute;
    left: 750px;
    top: 448px;
    width: 420px;
    height: 123px;
    overflow: hidden;
    background: #efefef;
    border-radius: 7px;
    font-family: "Open Sans", "Liberation Sans", sans-serif;
    color: #000;
}

.idm-title {
    height: 31px;
    padding: 7px 0 0 3px;
    background: #f3f3f3;
    color: #9a9a9a;
    font-size: 14.5px;
    line-height: 18px;
}

.idm-body {
    padding: 11px 14px 0 12px;
    font-size: 12.4px;
    line-height: 16px;
}

.idm-btn {
    display: block;
    width: 185px;
    height: 26px;
    margin: 8px auto 0;
    background: #fff;
    border: 1px solid #ccc;
    border-radius: 3px;
    font-family: inherit;
    font-size: 12px;
    color: #000;
}
```
